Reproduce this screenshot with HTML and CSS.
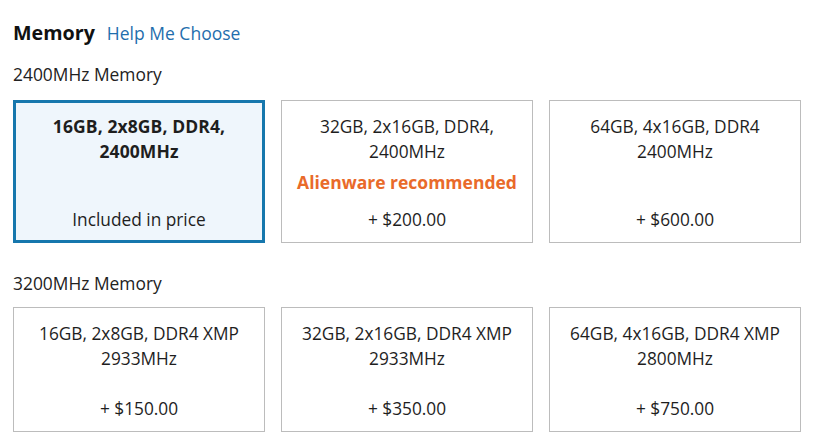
FILE: index.html
```html
<!DOCTYPE html>
<html lang="en">
<head>
<meta charset="utf-8">
<title>Memory</title>
<link rel="stylesheet" href="styles.css">
</head>
<body>
<div class="page">
  <div class="header">
    <h2 class="title">Memory</h2>
    <a class="help" href="#">Help Me Choose</a>
  </div>

  <div class="group-label">2400MHz Memory</div>
  <div class="options">
    <div class="card selected">
      <div class="desc">16GB, 2x8GB, DDR4,<br>2400MHz</div>
      <div class="price">Included in price</div>
    </div>
    <div class="card">
      <div class="desc">32GB, 2x16GB, DDR4,<br>2400MHz</div>
      <div class="reco">Alienware recommended</div>
      <div class="price">+ $200.00</div>
    </div>
    <div class="card">
      <div class="desc">64GB, 4x16GB, DDR4<br>2400MHz</div>
      <div class="price">+ $600.00</div>
    </div>
  </div>

  <div class="group-label second">3200MHz Memory</div>
  <div class="options">
    <div class="card">
      <div class="desc">16GB, 2x8GB, DDR4 XMP<br>2933MHz</div>
      <div class="price">+ $150.00</div>
    </div>
    <div class="card">
      <div class="desc">32GB, 2x16GB, DDR4 XMP<br>2933MHz</div>
      <div class="price">+ $350.00</div>
    </div>
    <div class="card">
      <div class="desc">64GB, 4x16GB, DDR4 XMP<br>2800MHz</div>
      <div class="price">+ $750.00</div>
    </div>
  </div>
</div>
</body>
</html>
```
FILE: styles.css
```css
html, body {
  margin: 0;
  padding: 0;
  background: #ffffff;
}
body {
  font-family: "Open Sans", "Liberation Sans", Arial, sans-serif;
  color: #1e1e1e;
}
.page {
  padding: 20px 15px 0 13px;
}
.header {
  display: flex;
  align-items: baseline;
  gap: 12px;
  height: 26px;
}
.title {
  margin: 0;
  font-size: 19.7px;
  font-weight: 700;
  line-height: 26px;
  color: #111;
}
.help {
  font-size: 17.5px;
  line-height: 26px;
  color: #1f6ead;
  text-decoration: none;
}
.group-label {
  margin-top: 17px;
  font-size: 17.4px;
  line-height: 22px;
  color: #222;
  margin-bottom: 15px;
}
.group-label.second {
  margin-top: 29px;
  margin-bottom: 13px;
}
.options {
  display: grid;
  grid-template-columns: repeat(3, 252px);
  column-gap: 16px;
}
.card {
  box-sizing: border-box;
  min-height: 125px;
  border: 1px solid #bcbcbc;
  padding: 13px 6px 10px;
  display: flex;
  flex-direction: column;
  align-items: center;
  text-align: center;
  font-size: 17.3px;
  line-height: 25px;
  color: #1e1e1e;
  background: #fff;
}
.card.selected {
  border-color: #1677ad;
  box-shadow: inset 0 0 0 2px #1677ad;
  background: #eff6fc;
}
.card.selected .desc {
  font-weight: 700;
  font-size: 17.5px;
  letter-spacing: 0.1px;
}
.reco {
  margin: 6px 0 12px;
  font-size: 17.5px;
  font-weight: 700;
  color: #e96a2a;
}
.price {
  margin-top: auto;
}
```
